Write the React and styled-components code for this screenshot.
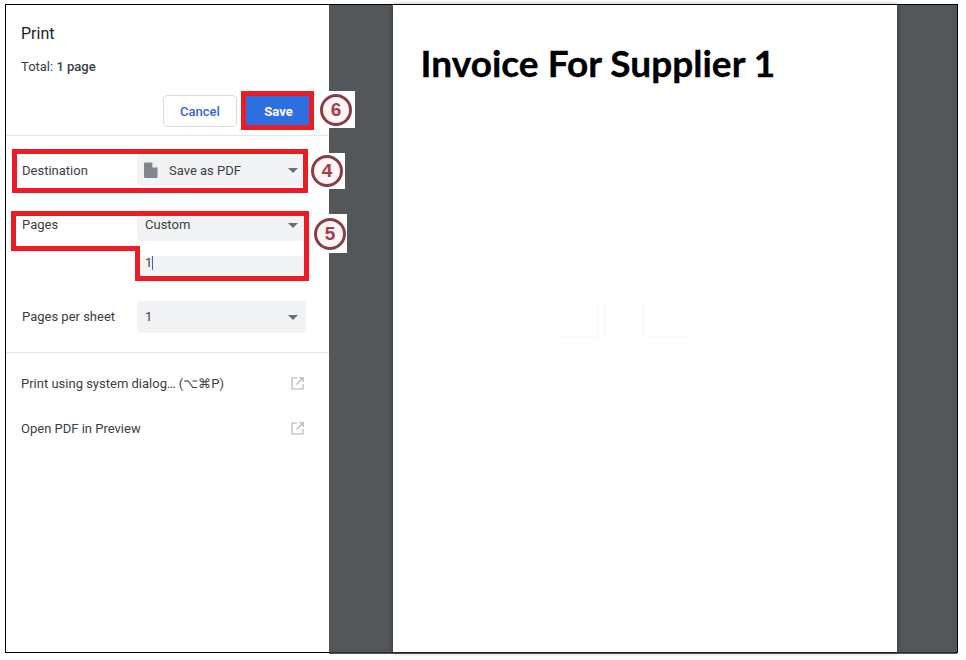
import React from "react";
import styled, { createGlobalStyle } from "styled-components";

const Global = createGlobalStyle`
  html, body { margin: 0; padding: 0; background: #fff; }
  body { font-family: Roboto, "Liberation Sans", sans-serif; }
`;

const Canvas = styled.div`
  position: relative;
  width: 966px;
  height: 660px;
  overflow: hidden;
  padding: 4px 0 0 5px;
  box-sizing: border-box;
`;

const Frame = styled.div`
  width: 953px;
  height: 649px;
  box-sizing: border-box;
  border: 1px solid #000;
  display: flex;
`;

const Sidebar = styled.aside`
  width: 323px;
  flex: none;
  background: #fff;
  display: flex;
  flex-direction: column;
  color: #3c4043;
  font-size: 13px;
`;

const Header = styled.header`
  padding: 20px 23px 8px 15px;
  border-bottom: 1px solid #e6e6e6;
`;

const Title = styled.h1`
  margin: 0;
  font-size: 16px;
  line-height: 18px;
  font-weight: 400;
  color: #202124;
`;

const Total = styled.div`
  margin-top: 16px;
  font-size: 13px;
  line-height: 16px;
  color: #3c4043;
  b { font-weight: 500; }
`;

const Actions = styled.div`
  margin-top: 20px;
  display: flex;
  justify-content: flex-end;
  gap: 8px;
  margin-right: -4px;
`;

const Button = styled.button`
  height: 32px;
  box-sizing: border-box;
  border-radius: 4px;
  font-family: inherit;
  font-size: 13px;
  font-weight: ${(p) => (p.$primary ? 700 : 500)};
  padding: 0 0 0 ${(p) => (p.$primary ? "2px" : "0")};
  width: ${(p) => (p.$primary ? "65px" : "74px")};
  border: 1px solid ${(p) => (p.$primary ? "#2d6ee0" : "#dadce0")};
  background: ${(p) => (p.$primary ? "#2d6ee0" : "#fff")};
  color: ${(p) => (p.$primary ? "#fff" : "#3367d6")};
`;

const Settings = styled.section`
  padding: 18px 23px 19px 16px;
  border-bottom: 1px solid #e6e6e6;
  display: flex;
  flex-direction: column;
  gap: 23px;
`;

const Label = styled.label`
  color: #3c4043;
  line-height: 13px;
`;

const Value = styled.span`
  flex: 1;
  line-height: 13px;
`;

const Row = styled.div`
  display: grid;
  grid-template-columns: 115px 169px;
  align-items: center;
  row-gap: 15px;

  ${Label}, ${Value} {
    padding: ${(p) => (p.$low ? "1px 0 0" : "0 0 1px")};
  }
`;

const Select = styled.div`
  height: 32px;
  box-sizing: border-box;
  background: #f1f3f4;
  border-radius: 4px;
  padding: 0 8px;
  display: flex;
  align-items: center;
  gap: 10px;
  color: #3c4043;
`;

const Caret = styled.span`
  width: 0;
  height: 0;
  border-left: 5px solid transparent;
  border-right: 5px solid transparent;
  border-top: 5px solid #6b6f74;
`;

const NumberInput = styled.div`
  grid-column: 2;
  height: 22px;
  box-sizing: border-box;
  background: #f1f3f4;
  padding: 0 8px;
  line-height: 13px;
  color: #3c4043;
`;

const Cursor = styled.span`
  display: inline-block;
  width: 1px;
  height: 14px;
  background: #3367d6;
  vertical-align: -3px;
`;

const Links = styled.nav`
  padding: 8px 25px 0 15px;
`;

const LinkRow = styled.div`
  height: 45px;
  display: flex;
  align-items: center;
  justify-content: space-between;
  color: #3c4043;
  font-size: 13px;
`;

const Preview = styled.main`
  flex: 1;
  margin-bottom: -2px;
  background: linear-gradient(to top, #54575a 1px, #2b2c2e 1px, #2b2c2e 2px, #54575a 2px);
  display: flex;
  justify-content: center;
  padding-left: 3px;
`;

const Sheet = styled.div`
  position: relative;
  width: 504px;
  margin-bottom: 2px;
  background: #fff;
  box-shadow: 0 0 5px rgba(0, 0, 0, 0.45);
  padding: 34px 0 0 28px;
  box-sizing: border-box;
`;

const Heading = styled.h2`
  margin: 0;
  font-family: Lato, "Open Sans", sans-serif;
  font-weight: 700;
  font-size: 37px;
  letter-spacing: 0.02px;
  -webkit-text-stroke: 0.35px #000;
  line-height: 48px;
  color: #000;
`;

const Smudge = styled.svg`
  position: absolute;
  left: 160px;
  top: 290px;
`;

const Annotations = styled.svg`
  position: absolute;
  left: 0;
  top: 0;
  pointer-events: none;
`;

const Badge = styled.div`
  position: absolute;
  left: ${(p) => p.$x}px;
  top: ${(p) => p.$y}px;
  width: ${(p) => p.$w}px;
  height: ${(p) => p.$h}px;
  padding-left: ${(p) => p.$inset || 0}px;
  box-sizing: border-box;
  background: #fff;
  display: flex;
  align-items: center;
`;

const Ring = styled.div`
  width: 32px;
  height: 32px;
  box-sizing: border-box;
  border: 3px solid #8a3d47;
  border-radius: 50%;
  display: flex;
  align-items: center;
  justify-content: center;
  font-family: "Liberation Sans", sans-serif;
  font-weight: 700;
  font-size: 19px;
  color: #a63c48;
  background: #fff6f6;
`;

const FileIcon = () => (
  <svg width="15" height="16" viewBox="0 0 15 16" style={{ flex: "none", marginLeft: "-1px" }}>
    <path d="M1.2 0.5h7l5.3 5v9.3a1.2 1.2 0 0 1-1.2 1.2H1.2A1.2 1.2 0 0 1 0 14.8V1.7a1.2 1.2 0 0 1 1.2-1.2z" fill="#80868b" />
    <path d="M8.3 0.5v5h5.2z" fill="#f1f3f4" />
  </svg>
);

const ExternalIcon = () => (
  <svg width="13" height="13" viewBox="0 0 13 13" fill="none" stroke="#aeb0b2" strokeWidth="1.1">
    <path d="M6 1H1v11h11V7" />
    <path d="M5.5 7.5L12 1M8 .8h4.2V5" />
  </svg>
);

export default function App() {
  return (
    <>
      <Global />
      <Canvas>
        <Frame>
          <Sidebar>
            <Header>
              <Title>Print</Title>
              <Total>
                Total: <b>1 page</b>
              </Total>
              <Actions>
                <Button>Cancel</Button>
                <Button $primary>Save</Button>
              </Actions>
            </Header>
            <Settings>
              <Row $low>
                <Label>Destination</Label>
                <Select>
                  <FileIcon />
                  <Value>Save as PDF</Value>
                  <Caret />
                </Select>
              </Row>
              <Row>
                <Label>Pages</Label>
                <Select>
                  <Value>Custom</Value>
                  <Caret />
                </Select>
                <NumberInput>
                  1<Cursor />
                </NumberInput>
              </Row>
              <Row>
                <Label>Pages per sheet</Label>
                <Select>
                  <Value>1</Value>
                  <Caret />
                </Select>
              </Row>
            </Settings>
            <Links>
              <LinkRow>
                <span>Print using system dialog… (⌥⌘P)</span>
                <ExternalIcon />
              </LinkRow>
              <LinkRow>
                <span>Open PDF in Preview</span>
                <ExternalIcon />
              </LinkRow>
            </Links>
          </Sidebar>
          <Preview>
            <Sheet>
              <Heading>Invoice For Supplier 1</Heading>
              <Smudge width="200" height="50" fill="none" stroke="#fef8f8" strokeWidth="2">
                <path d="M8 42h35M45 8v34M52 8v34M90 8v34M97 42h36" />
              </Smudge>
            </Sheet>
          </Preview>
        </Frame>
        <Annotations width="966" height="660" fill="none" stroke="#ec1c24" strokeWidth="5">
          <rect x="243.5" y="93.5" width="68" height="34" />
          <rect x="14.5" y="151.5" width="291" height="39" />
          <path d="M13.5 213.5H306.5V278.5H137.5V248.5H13.5Z" />
        </Annotations>
        <Badge $x={320} $y={91} $w={35} $h={37}>
          <Ring>6</Ring>
        </Badge>
        <Badge $x={311} $y={153} $w={34} $h={36}>
          <Ring>4</Ring>
        </Badge>
        <Badge $x={313} $y={214} $w={34} $h={39} $inset={1}>
          <Ring>5</Ring>
        </Badge>
      </Canvas>
    </>
  );
}
